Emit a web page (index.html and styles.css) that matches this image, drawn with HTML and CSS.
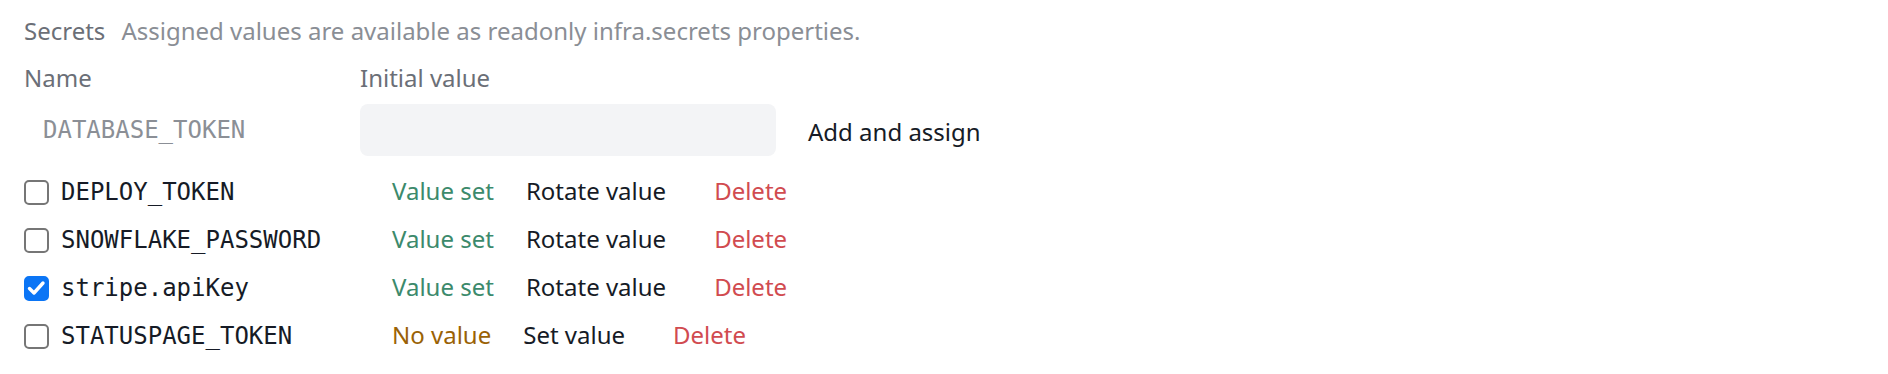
FILE: index.html
```html
<!DOCTYPE html>
<html lang="en">
<head>
<meta charset="utf-8">
<title>Secrets</title>
<link rel="stylesheet" href="styles.css">
</head>
<body>
<section class="secrets">
  <header class="secrets-head">
    <span class="secrets-title">Secrets</span>
    <span class="secrets-desc">Assigned values are available as readonly infra.secrets properties.</span>
  </header>
  <div class="col-heads">
    <span class="col-name">Name</span>
    <span class="col-value">Initial value</span>
  </div>
  <form class="add-row">
    <input class="name-input" type="text" placeholder="DATABASE_TOKEN">
    <input class="value-input" type="password">
    <button class="btn btn-add" type="button">Add and assign</button>
  </form>
  <ul class="secret-list">
    <li class="secret-row">
      <label class="secret-name"><input type="checkbox" class="check"><span class="mono">DEPLOY_TOKEN</span></label>
      <span class="status status-set">Value set</span>
      <button class="btn" type="button">Rotate value</button>
      <button class="btn btn-danger" type="button">Delete</button>
    </li>
    <li class="secret-row">
      <label class="secret-name"><input type="checkbox" class="check"><span class="mono">SNOWFLAKE_PASSWORD</span></label>
      <span class="status status-set">Value set</span>
      <button class="btn" type="button">Rotate value</button>
      <button class="btn btn-danger" type="button">Delete</button>
    </li>
    <li class="secret-row">
      <label class="secret-name"><input type="checkbox" class="check" checked><span class="mono">stripe.apiKey</span></label>
      <span class="status status-set">Value set</span>
      <button class="btn" type="button">Rotate value</button>
      <button class="btn btn-danger" type="button">Delete</button>
    </li>
    <li class="secret-row">
      <label class="secret-name"><input type="checkbox" class="check"><span class="mono">STATUSPAGE_TOKEN</span></label>
      <span class="status status-none">No value</span>
      <button class="btn" type="button">Set value</button>
      <button class="btn btn-danger" type="button">Delete</button>
    </li>
  </ul>
</section>
</body>
</html>
```

FILE: styles.css
```css
* { box-sizing: border-box; }
html, body { margin: 0; padding: 0; background: #ffffff; }
body {
  font-family: "Noto Sans", "Open Sans", sans-serif;
  font-size: 24px;
  line-height: 32px;
  color: #161b26;
}
.secrets { padding: 15px 24px 0 24px; }
.secrets-head { display: flex; align-items: baseline; height: 32px; }
.secrets-title { color: #6b6f77; }
.secrets-desc { color: #8a8e95; margin-left: 16px; }

.col-heads { display: flex; margin-top: 15px; height: 32px; color: #6b6f77; }
.col-name { width: 336px; }

.add-row { display: flex; align-items: center; margin-top: 10px; height: 52px; }
.name-input {
  width: 336px; height: 52px;
  border: 0; background: transparent;
  padding: 0 0 0 19px;
  font-family: "DejaVu Sans Mono", monospace;
  font-size: 24px;
  color: #161b26;
  outline: none;
}
.name-input::placeholder { color: #8b8f96; }
.value-input {
  width: 416px; height: 52px;
  border: 0; border-radius: 8px;
  background: #f3f4f6;
  outline: none;
}
.btn {
  font-family: "Noto Sans", "Open Sans", sans-serif;
  font-size: 24px;
  line-height: 32px;
  color: #161b26;
  background: transparent;
  border: 0;
  padding: 0 16px;
  margin-left: 16px;
  cursor: pointer;
}
.btn-add { margin-left: 16px; padding-top: 4px; }
.btn-danger { color: #d14b50; }

.secret-list { list-style: none; margin: 12px 0 0 0; padding: 0; }
.secret-row { display: flex; align-items: center; height: 48px; }
.secret-row .status,
.secret-row .btn { padding-bottom: 3px; }
.secret-name { display: flex; align-items: center; width: 368px; }
.mono {
  font-family: "DejaVu Sans Mono", monospace;
  font-size: 24px;
  margin-left: 12px;
  color: #161b26;
}
.check {
  -webkit-appearance: none; appearance: none;
  margin: 0;
  width: 25px; height: 25px;
  border: 2px solid #767676;
  border-radius: 5px;
  background: #fff;
  flex: none;
}
.check:checked {
  border-color: #0b75f5;
  background: #0b75f5 url("data:image/svg+xml;utf8,<svg xmlns='http://www.w3.org/2000/svg' viewBox='0 0 25 25'><path d='M5.5 12.5l4.5 4.5l9-10' fill='none' stroke='white' stroke-width='3.4' stroke-linecap='round' stroke-linejoin='round'/></svg>") center/25px 25px no-repeat;
}
.status-set { color: #3c8a6c; }
.status-none { color: #9a6205; }
```
